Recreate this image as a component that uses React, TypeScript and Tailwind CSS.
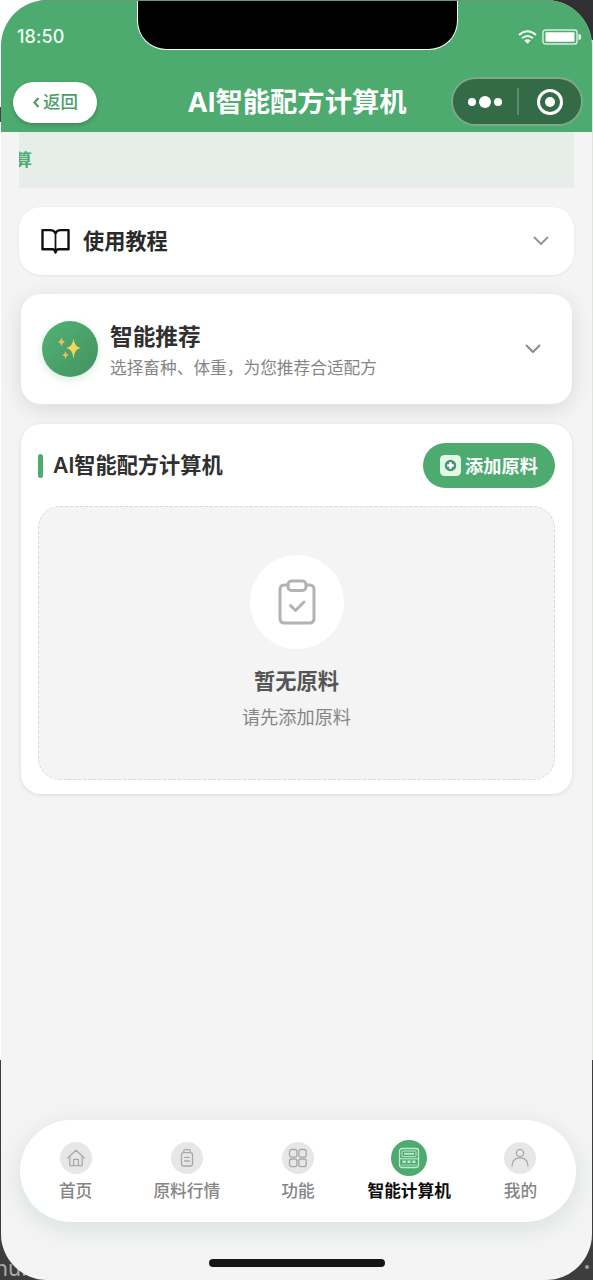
import type { ReactNode } from "react";
import clsx from "clsx";

const NAV_ITEMS: { label: string; icon: ReactNode; active?: boolean }[] = [
  {
    label: "首页",
    icon: (
      <svg width="20" height="20" viewBox="0 0 20 20" fill="none" stroke="#a8a8a8" strokeWidth="1.3" strokeLinejoin="round" strokeLinecap="round">
        <path d="M1.7 10 10 2.2 18.3 10M3.8 8.2v9.4h12.4V8.2M7.6 17.4v-6h4.8v6" />
      </svg>
    ),
  },
  {
    label: "原料行情",
    icon: (
      <svg width="20" height="20" viewBox="0 0 20 20" fill="none" stroke="#a8a8a8" strokeWidth="1.3" strokeLinejoin="round" strokeLinecap="round">
        <rect x="4.5" y="4.6" width="11" height="13.4" rx="2" />
        <path d="M6.8 4.4V2.6q0-1 1-1h4.4q1 0 1 1v1.8M7.6 9.3h4.8M7.6 13h4.8" />
      </svg>
    ),
  },
  {
    label: "功能",
    icon: (
      <svg width="20" height="20" viewBox="0 0 20 20" fill="none" stroke="#a8a8a8" strokeWidth="1.3">
        <rect x="1.5" y="1.5" width="7.4" height="7.6" rx="2" />
        <rect x="10.8" y="1.5" width="7.4" height="7.6" rx="2" />
        <rect x="1.5" y="11" width="7.4" height="7.6" rx="2" />
        <rect x="10.8" y="11" width="7.4" height="7.6" rx="2" />
      </svg>
    ),
  },
  {
    label: "智能计算机",
    active: true,
    icon: (
      <svg width="22" height="22" viewBox="0 0 22 22" fill="none" stroke="#bfecd0" strokeWidth="1.3">
        <rect x="1.5" y="1.5" width="19" height="19" rx="2.5" />
        <rect x="4" y="4" width="14" height="5.6" rx="1" strokeWidth="1" />
        <path d="M6 6.8h10" strokeWidth="1.8" />
        <path d="M2 11.8h18" strokeWidth="1.1" />
        <path d="M4.5 14.8h3.2M9.4 14.8h3.2M14.3 14.8h3.2" strokeWidth="2.6" />
        <path d="M3 18h16" strokeWidth="0.8" />
      </svg>
    ),
  },
  {
    label: "我的",
    icon: (
      <svg width="20" height="20" viewBox="0 0 20 20" fill="none" stroke="#a8a8a8" strokeWidth="1.3" strokeLinecap="round">
        <circle cx="10" cy="5" r="3.7" />
        <path d="M2 18.2C2.2 12.7 5.5 9.8 10 9.8s7.8 2.9 8 8.4" />
      </svg>
    ),
  },
];

function Chevron({ className }: { className: string }) {
  return (
    <svg className={className} width="16" height="10" viewBox="0 0 16 10" fill="none" stroke="currentColor" strokeWidth="1.8" strokeLinecap="round" strokeLinejoin="round">
      <path d="M1.5 1.5 8 8l6.5-6.5" />
    </svg>
  );
}

function Header() {
  return (
    <header className="relative h-[132px] shrink-0 bg-[#4dab6f] border-t border-[#6f927c]">
      {/* Notch */}
      <div className="absolute top-0 left-[136px] w-[321px] h-[49px] rounded-b-[29px] bg-black border border-t-0 border-white" />

      {/* Status bar */}
      <div className="flex h-[70px] items-center justify-between pl-4 pr-[10px]">
        <span className="text-[18px] font-medium tracking-[0.1px] text-[#effff3]">18:50</span>
        <div className="flex items-center gap-[5px] pt-[2px]">
          <svg width="19" height="14" viewBox="0 0 19 14" fill="none" stroke="#f2fff5" strokeWidth="2">
            <path d="M1 5q8.5-7.4 17 0M4 8.3q5.500-4.500 11 0" />
            <path d="M6.3 10.6q3.200-2.600 6.400 0L9.500 13.700z" fill="#f2fff5" stroke="none" />
          </svg>
          <svg width="40" height="16" viewBox="0 0 40 16" fill="none">
            <rect x="1" y="1" width="34" height="14" rx="2.5" stroke="#d9f2e0" strokeWidth="1.4" />
            <rect x="3.5" y="3.3" width="29" height="9.5" rx="1" fill="#fff" />
            <path d="M36.5 5q2.700 0 2.700 3t-2.700 3z" fill="#f2fff5" />
          </svg>
        </div>
      </div>

      {/* Navigation bar */}
      <div className="grid h-[61px] grid-cols-[130px_1fr_130px] items-center pl-3 pr-[11px]">
        <button className="mt-[2px] flex h-[41px] w-[84px] items-center justify-center gap-[3px] rounded-full bg-white text-[17.5px] font-medium text-[#4a9f68] shadow-[0_2px_4px_rgba(0,0,0,0.2)]">
          <svg width="8" height="11" viewBox="0 0 8 11" fill="none" stroke="currentColor" strokeWidth="2.2">
            <path d="M6.5 1 2.500 5.500l4 4.500" />
          </svg>
          返回
        </button>
        <h1 className="mt-[2px] whitespace-nowrap text-center text-[27.3px] leading-none font-bold text-white">AI智能配方计算机</h1>
        <div className="flex h-[49px] w-[132px] items-center rounded-full border-2 border-[#7da989] bg-[#326b45]">
          <div className="flex w-[64px] items-center justify-center gap-[3px]">
            <i className="size-2 rounded-full bg-white" />
            <i className="size-3 rounded-full bg-white" />
            <i className="size-2 rounded-full bg-white" />
          </div>
          <div className="h-[27px] w-[2px] bg-[#5f8c6d]" />
          <div className="flex flex-1 items-center justify-center">
            <div className="flex size-[26px] items-center justify-center rounded-full border-[3px] border-white">
              <i className="size-[10px] rounded-full bg-white" />
            </div>
          </div>
        </div>
      </div>
    </header>
  );
}

function TutorialCard() {
  return (
    <section className="mx-[18px] mt-[19px] flex h-[68px] items-center rounded-[22px] bg-white pl-[22px] pr-[25px] shadow-[0_1px_3px_rgba(0,0,0,0.07)]">
      <svg width="29" height="27" viewBox="0 0 30 28" fill="none" stroke="#111" strokeWidth="2.5" strokeLinejoin="round">
        <path d="M15 5.5C14 3 12 2.200 9.500 2.200H1.500V22H12q2.200 0 3 3.500Q15.800 22 18 22H28.500V2.200H20.500C18 2.200 16 3 15 5.500z" />
        <path d="M15 5.5v20" strokeWidth="1.8" />
      </svg>
      <h2 className="ml-[13px] mt-px flex-1 text-[21.2px] leading-none font-semibold text-[#2a2a2a]">使用教程</h2>
      <Chevron className="text-[#929292]" />
    </section>
  );
}

function RecommendCard() {
  return (
    <section className="mx-5 mt-[19px] flex h-[110px] items-center rounded-[20px] bg-white pl-[21px] pr-[31px] shadow-[0_5px_22px_rgba(0,0,0,0.11)]">
      <div className="flex size-14 items-center justify-center rounded-full bg-linear-to-br from-[#52b376] to-[#43915f] shadow-[0_3px_9px_rgba(77,171,111,0.22)]">
        <svg width="26" height="26" viewBox="0 0 26 26" fill="#f6d657">
          <path d="M16.5 2.500q.9 8.700 7.400 9.500-6.500.8-7.400 10.500-.9-9.700-7.400-10.500 6.500-.8 7.400-9.500z" />
          <path d="M4.5 1q.7 4.300 3.700 4.900-3 .6-3.700 4.700-.7-4.100-3.700-4.700 3-.6 3.700-4.900zM8.500 15q.6 3.300 3.400 4-2.800.7-3.400 4-.6-3.300-3.400-4 2.800-.7 3.400-4z" fill="#edbe5a" />
        </svg>
      </div>
      <div className="ml-[12px] mt-[2px] flex-1">
        <h2 className="text-[22.7px] leading-[32px] font-bold text-[#303030]">智能推荐</h2>
        <p className="text-[16.7px] leading-[24px] mt-[3px] text-[#858585]">选择畜种、体重，为您推荐合适配方</p>
      </div>
      <Chevron className="text-[#858585]" />
    </section>
  );
}

function CalculatorCard() {
  return (
    <section className="mx-5 mt-5 flex h-[370px] flex-col rounded-[20px] bg-white pl-[17px] pr-[17px] pt-[19px] shadow-[0_1px_4px_rgba(0,0,0,0.1)]">
      <div className="flex h-[45px] items-center">
        <i className="h-6 w-[5px] rounded-full bg-[#4dab6f]" />
        <h2 className="ml-[10px] mt-px flex-1 text-[21.2px] leading-none font-semibold text-[#303030]">AI智能配方计算机</h2>
        <button className="flex h-[45px] w-[132px] items-center justify-center gap-[4px] rounded-full bg-[#4dab6f] text-[18.2px] font-bold text-white">
          <svg width="21" height="21" viewBox="0 0 21 21">
            <rect width="21" height="21" rx="4.5" fill="#e1f8e5" />
            <circle cx="10.5" cy="10.5" r="5.7" fill="#4a956e" />
            <path d="M10.5 7.200v6.600M7.200 10.500h6.600" stroke="#fff" strokeWidth="2.6" />
          </svg>
          <span className="mt-[2px]">添加原料</span>
        </button>
      </div>

      {/* Empty state */}
      <div className="mt-[18px] flex h-[274px] flex-col items-center rounded-[22px] border border-dashed border-[#dadada] bg-[#f4f4f4] pt-[48px]">
        <div className="flex size-[94px] items-center justify-center rounded-full bg-white">
          <svg width="38" height="46" viewBox="0 0 38 46" fill="none" stroke="#b3b3b3" strokeWidth="3" strokeLinecap="round" strokeLinejoin="round">
            <path d="M10 6H6.500Q2 6 2 10.500v29Q2 44 6.500 44h25q4.500 0 4.500-4.500v-29Q36 6 31.500 6H28" />
            <rect x="10" y="2" width="18" height="9.5" rx="3.5" />
            <path d="m12.5 26.500 5 5 8.500-8.500" />
          </svg>
        </div>
        <h3 className="mt-[17px] text-[21.2px] leading-[30px] font-semibold text-[#555]">暂无原料</h3>
        <p className="mt-[7px] text-[18.2px] leading-[28px] text-[#858585]">请先添加原料</p>
      </div>
    </section>
  );
}

function TabBar() {
  return (
    <nav className="mx-[19px] mt-auto grid h-[102px] w-[556px] shrink-0 grid-cols-5 rounded-full bg-white pt-5 shadow-[0_6px_24px_rgba(60,130,100,0.17)]">
      {NAV_ITEMS.map((item) => (
        <div key={item.label} className="flex flex-col items-center">
          <div className="flex h-9 items-center">
            <div
              className={clsx(
                "flex items-center justify-center rounded-full",
                item.active ? "size-9 bg-[#4dab6f]" : "size-8 bg-[#e7e7e7]",
              )}
            >
              {item.icon}
            </div>
          </div>
          <span
            className={clsx(
              "mt-[3px] whitespace-nowrap text-[16.7px] leading-6",
              item.active ? "font-bold text-[#0d0d0d]" : "font-medium text-[#858585]",
            )}
          >
            {item.label}
          </span>
        </div>
      ))}
    </nav>
  );
}

export default function App() {
  return (
    <div className="relative h-[1280px] w-[593px] overflow-hidden bg-linear-to-b from-white from-[1060px] to-[#3d3d3d] to-[1060px] px-px font-['Inter','Noto_Sans_CJK_SC',sans-serif]">
      {/* Window corners behind the phone */}
      <div className="absolute top-0 right-0 h-10 w-16 bg-[#303032]" />
      <div className="absolute top-10 right-0 h-[1020px] w-px bg-[#dfe3e0]" />
      <i className="absolute top-[107px] left-0 h-[15px] w-px bg-[#444]" />
      <span className="absolute -left-[5px] bottom-0 text-[22px] leading-6 text-[#a8a8a8]">nu.</span>
      <i className="absolute right-[4px] bottom-[11px] size-[4px] rounded-full bg-[#a0a0a0]" />

      <main className="relative flex h-full flex-col overflow-hidden rounded-[46px] bg-[#f4f4f4]">
        <Header />
        <div className="mx-[18px] flex h-14 shrink-0 items-center overflow-hidden bg-[#e7eee9]">
          <span className="-ml-[4px] mt-px text-[17px] leading-none font-semibold text-[#4dab6f]">算</span>
        </div>
        <TutorialCard />
        <RecommendCard />
        <CalculatorCard />
        <TabBar />
        <div className="mt-[37px] mb-[13px] ml-[208px] h-2 w-[176px] shrink-0 rounded-full bg-[#161616]" />
      </main>
    </div>
  );
}
